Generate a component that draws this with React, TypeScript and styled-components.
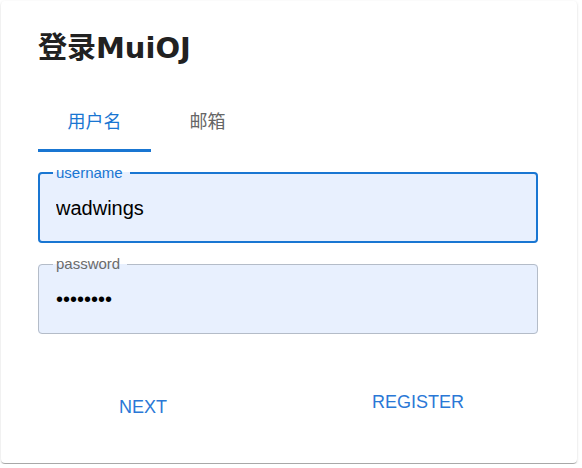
import styled, { createGlobalStyle } from "styled-components"

const GlobalStyle = createGlobalStyle`
  html, body {
    margin: 0;
    padding: 0;
    background: #fff;
  }
  body {
    font-family: "Liberation Sans", Arial, "Noto Sans CJK SC", sans-serif;
  }
  * {
    box-sizing: border-box;
  }
`

const Card = styled.div`
  margin: 1px;
  width: 576px;
  height: 462px;
  background: #fff;
  border-radius: 4px;
  box-shadow: 0 2px 1px -1px rgba(0, 0, 0, 0.2), 0 1px 1px 0 rgba(0, 0, 0, 0.14),
    0 1px 3px 0 rgba(0, 0, 0, 0.12);
  padding: 27px 39px 0 37px;
  display: flex;
  flex-direction: column;
`

const Title = styled.h1`
  margin: 0;
  font-family: "DejaVu Sans", "Noto Sans CJK SC", sans-serif;
  font-size: 29px;
  font-weight: 700;
  line-height: 40px;
  color: #212121;
`

const Tabs = styled.div`
  display: flex;
  margin-top: 36px;
  margin-bottom: 14px;
`

const Tab = styled.div<{ $active?: boolean }>`
  width: 113px;
  height: 48px;
  display: flex;
  justify-content: center;
  padding-top: 4px;
  font-family: "Noto Sans CJK SC", sans-serif;
  font-size: 18px;
  line-height: 24px;
  color: ${p => (p.$active ? "#1976d2" : "#666")};
  border-bottom: 3px solid ${p => (p.$active ? "#1976d2" : "transparent")};
`

const Field = styled.fieldset<{ $focused?: boolean }>`
  display: block;
  margin: 0 0 14px;
  height: 77px;
  padding: 16px ${p => (p.$focused ? 16 : 17)}px 0;
  border: ${p => (p.$focused ? "2px solid #1976d2" : "1px solid #b4bcc8")};
  border-radius: 4px;
  background: #e8f0fe;
`

const Legend = styled.legend<{ $focused?: boolean }>`
  margin-left: -3px;
  padding: 0 7px 0 3px;
  font-size: 15px;
  line-height: 14px;
  color: ${p => (p.$focused ? "#1976d2" : "#6b6b6b")};
`

const Input = styled.input`
  display: block;
  width: 100%;
  height: 24px;
  border: none;
  outline: none;
  background: transparent;
  padding: 0;
  font-family: "Liberation Sans", Arial, sans-serif;
  font-size: 20px;
  line-height: 24px;
  color: #000;
`

const Actions = styled.div`
  display: flex;
  justify-content: space-between;
  align-items: flex-start;
  padding: 0 74px 0 81px;
  margin-top: 44px;
`

const TextButton = styled.button<{ $drop?: number }>`
  border: none;
  background: none;
  padding: 0;
  margin-top: ${p => p.$drop ?? 0}px;
  font-family: "Liberation Sans", Arial, sans-serif;
  font-size: 18px;
  line-height: 21px;
  text-transform: uppercase;
  color: #2a78d6;
  cursor: pointer;
`

export default function App() {
  return (
    <>
      <GlobalStyle />
      <Card>
        <Title>登录MuiOJ</Title>
        <Tabs>
          <Tab $active>用户名</Tab>
          <Tab>邮箱</Tab>
        </Tabs>
        <Field $focused>
          <Legend $focused>username</Legend>
          <Input value="wadwings" readOnly />
        </Field>
        <Field>
          <Legend>password</Legend>
          <Input type="password" value="12345678" readOnly />
        </Field>
        <Actions>
          <TextButton $drop={5}>Next</TextButton>
          <TextButton>Register</TextButton>
        </Actions>
      </Card>
    </>
  )
}
